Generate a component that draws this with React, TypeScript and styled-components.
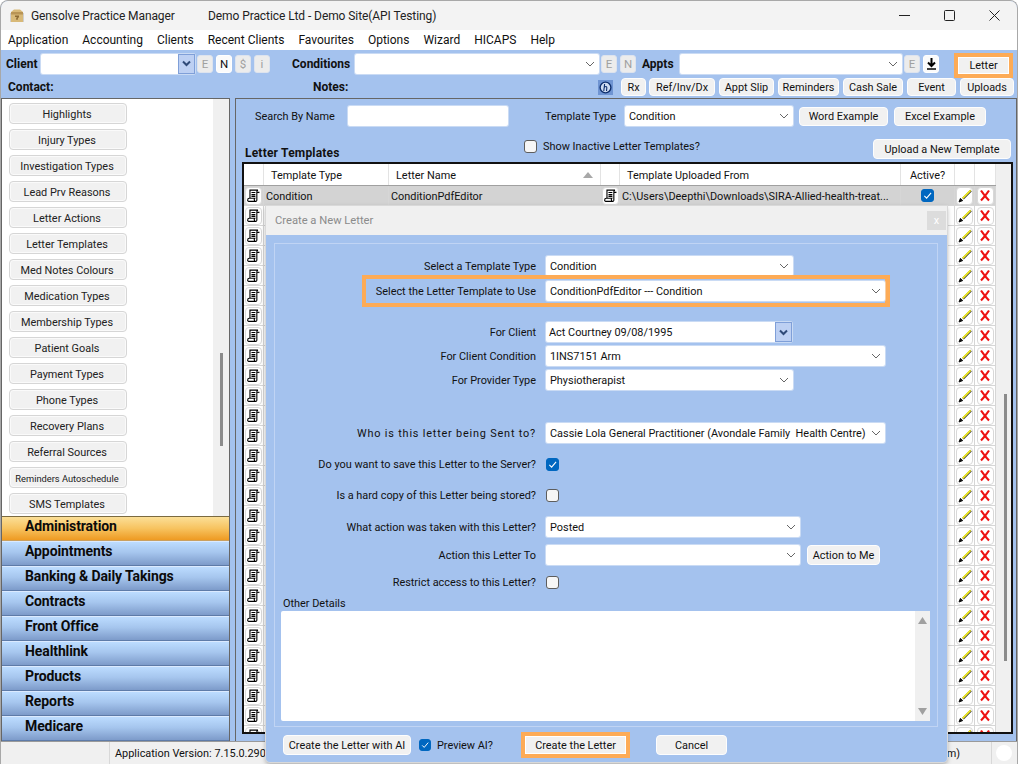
import React from 'react';
import styled, { createGlobalStyle } from 'styled-components';

const GlobalStyle = createGlobalStyle`
  html, body { margin: 0; padding: 0; background: #fff; }
  * { box-sizing: border-box; }
  body { font-family: Roboto, "Liberation Sans", sans-serif; font-size: 10.9px; color: #111; }
`;

const BLUE = '#a4c2ee';
const ORANGE = '#fdab56';

const Win = styled.div`
  position: relative;
  width: 1018px;
  height: 764px;
  overflow: hidden;
  display: flex;
  flex-direction: column;
  background: ${BLUE};
  border-radius: 8px 8px 0 0;
  border: 1px solid #a8a8a8;
  border-bottom: 0;
`;

const TitleBar = styled.div`
  height: 29px;
  flex: none;
  display: flex;
  align-items: center;
  background: #f3f3f3;
  padding-left: 8px;
  color: #222;
  font-size: 12px;
`;
const AppName = styled.span`
  margin-left: 6px;
  width: 177px;
  letter-spacing: -0.1px;
`;
const WinTitle = styled.span`
  flex: 1;
  letter-spacing: -0.08px;
`;
const WinBtn = styled.div`
  width: 45px;
  height: 29px;
  display: flex;
  align-items: center;
  justify-content: center;
`;

const MenuBar = styled.div`
  height: 20px;
  flex: none;
  display: flex;
  gap: 14px;
  align-items: center;
  padding-left: 7px;
  background: #fff;
  font-size: 12px;
`;

const ToolBar = styled.div`
  height: 48px;
  flex: none;
  padding-top: 3px;
`;
const ToolRow = styled.div`
  display: flex;
  align-items: center;
  height: 21px;
`;
const ToolRowTwo = styled(ToolRow)`
  height: 20px;
  margin-top: 3px;
`;
const BoldLabel = styled.span<{ $w: number; $ml?: number }>`
  width: ${(p) => p.$w}px;
  margin-left: ${(p) => p.$ml ?? 0}px;
  font-weight: 700;
  flex: none;
  font-size: 12px;
`;

const Combo = styled.div<{ $w: number; $ml?: number }>`
  width: ${(p) => p.$w}px;
  height: 20px;
  margin-left: ${(p) => p.$ml ?? 0}px;
  flex: none;
  display: flex;
  align-items: center;
  justify-content: space-between;
  padding-left: 4px;
  padding-right: 4px;
  background: #fff;
  border-radius: 2px;
  box-shadow: 0 0 0 1px rgba(240, 244, 250, 0.5);
  white-space: nowrap;
`;
const ComboInput = styled(Combo)`
  padding-left: 3px;
  padding-right: 0;
`;
const DropBtn = styled.div`
  width: 17px;
  height: 20px;
  display: flex;
  align-items: center;
  justify-content: center;
  background: #bdd0f3;
  border: 1px solid #7f9fd8;
`;
const MiniBtn = styled.div<{ $on?: boolean; $ml?: number }>`
  width: 16px;
  height: 18px;
  margin-left: ${(p) => p.$ml ?? 3}px;
  flex: none;
  display: flex;
  align-items: center;
  justify-content: center;
  background: ${(p) => (p.$on ? '#fbfbfb' : '#ececec')};
  border: 1px solid ${(p) => (p.$on ? '#fff' : '#dde3ee')};
  border-radius: 3px;
  font-size: 11.5px;
  color: ${(p) => (p.$on ? '#111' : '#a0a0a0')};
`;
const Btn = styled.div<{ $w: number; $ml?: number; $h?: number }>`
  width: ${(p) => p.$w}px;
  height: ${(p) => p.$h ?? 18}px;
  margin-left: ${(p) => p.$ml ?? 0}px;
  flex: none;
  display: flex;
  align-items: center;
  justify-content: center;
  background: #f1f1f1;
  border: 1.5px solid #fdfdfd;
  border-radius: 4px;
  white-space: nowrap;
`;
const Marked = styled.div<{ $ml?: number }>`
  margin-left: ${(p) => p.$ml ?? 0}px;
  flex: none;
  border: 4px solid ${ORANGE};
  background: #fff;
`;
const MarkedBtn = styled.div<{ $w: number; $h: number }>`
  width: ${(p) => p.$w}px;
  height: ${(p) => p.$h}px;
  display: flex;
  align-items: center;
  justify-content: center;
  background: #f1f1f1;
  border: 1.5px solid #fff;
`;
const LetterWrap = styled.div`
  margin-left: 15px;
  margin-top: 3px;
`;
const HelpMark = styled.div`
  width: 15px;
  height: 15px;
  flex: none;
  margin-left: 245px;
  display: flex;
  align-items: center;
  justify-content: center;
  background: #6f94d2;
`;

const Body = styled.div`
  flex: none;
  height: 643px;
  display: flex;
`;

const Side = styled.div`
  width: 229px;
  flex: none;
  display: flex;
  flex-direction: column;
  border: 1px solid #666;
  border-bottom: 0;
`;
const SideList = styled.div`
  height: 417px;
  flex: none;
  display: flex;
  background: #fff;
  overflow: hidden;
`;
const SideButtons = styled.div`
  width: 211px;
  padding: 4px 0 0 7px;
  display: flex;
  flex-direction: column;
  gap: 5px;
`;
const SideBtn = styled.div<{ $small?: boolean }>`
  width: 118px;
  height: 21px;
  flex: none;
  display: flex;
  align-items: center;
  justify-content: center;
  padding: 1px 2px 0 0;
  background: #f1f1f1;
  border: 1px solid #d6d6d6;
  border-radius: 4px;
  box-shadow: inset 0 0 0 1px #fafafa;
  font-size: ${(p) => (p.$small ? '9.3px' : '10.9px')};
  white-space: nowrap;
  color: #222;
`;
const Track = styled.div<{ $w: number; $top: number; $pl: number }>`
  width: ${(p) => p.$w}px;
  flex: none;
  background: #f0f0f0;
  padding-top: ${(p) => p.$top}px;
  padding-left: ${(p) => p.$pl}px;
`;
const Thumb = styled.div<{ $h: number }>`
  width: 3px;
  height: ${(p) => p.$h}px;
  background: #8b8b8b;
`;
const Section = styled.div<{ $on?: boolean }>`
  height: 25px;
  flex: none;
  display: flex;
  align-items: center;
  padding: 0 0 6px 23px;
  font-size: 14px;
  font-weight: 700;
  color: #0b0b0b;
  letter-spacing: -0.1px;
  border-top: 1px solid ${(p) => (p.$on ? '#7b6a40' : '#dbeaff')};
  border-bottom: 1px solid ${(p) => (p.$on ? '#c9a060' : '#5e7ba8')};
  background: ${(p) =>
    p.$on
      ? 'linear-gradient(#fbdf97, #f7c35f 50%, #ee9a22)'
      : 'linear-gradient(#bcdcff, #a6c6ee 45%, #7d9bca)'};
`;

const Main = styled.div`
  flex: none;
  width: 782px;
  margin-left: 5px;
  padding: 7px 0 0 6px;
  border: 1px solid #666;
  border-width: 1px 1px 0 1px;
`;
const FilterRow = styled.div`
  display: flex;
  align-items: center;
  height: 20px;
`;
const FieldLabel = styled.span<{ $w: number; $ml?: number }>`
  width: ${(p) => p.$w}px;
  margin-left: ${(p) => p.$ml ?? 0}px;
  flex: none;
  white-space: nowrap;
`;
const TitleRow = styled.div`
  display: flex;
  align-items: flex-start;
  height: 20px;
  margin-top: 13px;
`;
const TableTitle = styled.b`
  width: 279px;
  margin: 7px 0 0 3px;
  flex: none;
  font-size: 12px;
  letter-spacing: 0.2px;
`;
const Check = styled.div<{ $on?: boolean; $s?: number; $ml?: number; $mt?: number }>`
  width: ${(p) => p.$s ?? 13}px;
  height: ${(p) => p.$s ?? 13}px;
  margin-left: ${(p) => p.$ml ?? 0}px;
  margin-top: ${(p) => p.$mt ?? 0}px;
  flex: none;
  display: flex;
  align-items: center;
  justify-content: center;
  background: ${(p) => (p.$on ? '#0067c0' : '#f6f6f6')};
  border: 1px solid ${(p) => (p.$on ? '#0067c0' : '#5d5d5d')};
  border-radius: 3px;
`;
const InactiveLabel = styled(FieldLabel)`
  margin-top: 1px;
`;

const Table = styled.div`
  margin-top: 3px;
  width: 771px;
  height: 572px;
  display: flex;
  border: 2px solid #111;
  background: #fff;
  overflow: hidden;
`;
const TableCols = styled.div`
  width: 752px;
  flex: none;
  display: flex;
  flex-direction: column;
`;
const HeadRow = styled.div`
  display: grid;
  grid-template-columns: 20px 125px 212px 19px 281px 54px 20px 21px;
  height: 22px;
  flex: none;
  border-bottom: 1px solid #a0a0a0;
`;
const HeadCell = styled.div<{ $center?: boolean }>`
  display: flex;
  align-items: center;
  justify-content: ${(p) => (p.$center ? 'center' : 'space-between')};
  padding: 1px 7px 0;
  border-right: 1px solid #e3e3e3;
  white-space: nowrap;
`;
const DataRow = styled(HeadRow)<{ $on?: boolean }>`
  height: 20px;
  border-bottom: 1px solid #d6d6d6;
  background: ${(p) => (p.$on ? '#d3d3d3' : '#fff')};
`;
const DataCell = styled.div<{ $center?: boolean }>`
  display: flex;
  align-items: center;
  justify-content: ${(p) => (p.$center ? 'center' : 'flex-start')};
  padding-left: ${(p) => (p.$center ? 0 : 2)}px;
  padding-top: ${(p) => (p.$center ? 0 : 1)}px;
  border-right: 1px solid #d6d6d6;
  white-space: nowrap;
  overflow: hidden;
`;
const IconBtn = styled.div`
  width: 17px;
  height: 18px;
  flex: none;
  display: flex;
  align-items: center;
  justify-content: center;
  background: #fff;
  border: 1px solid #d8d8d8;
  border-radius: 4px;
`;

const Modal = styled.div`
  position: absolute;
  left: 265px;
  top: 205px;
  width: 681px;
  height: 556px;
  background: ${BLUE};
  border-radius: 0 0 4px 4px;
  box-shadow: 0 0 0 1px #d9d9d9, 0 2px 5px rgba(0, 0, 0, 0.35);
`;
const ModalHead = styled.div`
  height: 29px;
  display: flex;
  align-items: center;
  justify-content: space-between;
  padding: 0 1px 0 9px;
  background: #f0f0f0;
  color: #8b8b8b;
  font-size: 11.2px;
`;
const CloseBox = styled.div`
  width: 19px;
  height: 19px;
  display: flex;
  align-items: center;
  justify-content: center;
  background: #dcdcdc;
  color: #fff;
  font-size: 11px;
`;
const Frame = styled.div`
  margin: 8px 9px 0 8px;
  height: 484px;
  padding-top: 12px;
  border: 1px solid #c0d4f4;
`;
const FormRow = styled.div<{ $mt?: number }>`
  display: flex;
  align-items: center;
  height: 20px;
  margin-top: ${(p) => p.$mt ?? 0}px;
`;
const FormLabel = styled.span<{ $track?: number }>`
  width: 261px;
  margin-right: 10px;
  flex: none;
  text-align: right;
  white-space: nowrap;
  letter-spacing: ${(p) => p.$track ?? 0}px;
`;
const MarkedRow = styled.div`
  display: flex;
  align-items: center;
  width: 528px;
  height: 32px;
  margin: -1px 0 0 87px;
  border: 4px solid ${ORANGE};
  border-right-width: 5px;
  position: relative;
`;
const MarkedLabel = styled(FormLabel)`
  width: 170px;
`;
const OtherLabel = styled.div`
  margin: 3px 0 0 8px;
  height: 16px;
  display: flex;
  align-items: center;
`;
const Memo = styled.div`
  margin-left: 6px;
  width: 649px;
  height: 110px;
  display: flex;
  justify-content: flex-end;
  background: #fff;
  border-radius: 2px;
`;
const MemoBar = styled.div`
  width: 15px;
  background: #f0f0f0;
  display: flex;
  flex-direction: column;
  justify-content: space-between;
  align-items: center;
  padding: 6px 0;
`;
const ModalFoot = styled.div`
  display: flex;
  align-items: center;
  height: 26px;
  margin-top: 5px;
  padding-left: 17px;
`;
const FootText = styled.span`
  margin-left: 6px;
  width: 84px;
  flex: none;
`;

const Status = styled.div`
  flex: none;
  height: 23px;
  display: flex;
  align-items: center;
  background: #f0f0f0;
  border-top: 1px solid #9a9a9a;
`;
const StatusCell = styled.div<{ $w: number }>`
  width: ${(p) => p.$w}px;
  flex: none;
  height: 100%;
  display: flex;
  align-items: center;
  border-right: 1px solid #d8d8d8;
  white-space: nowrap;
`;
const StatusMain = styled(StatusCell)`
  padding-left: 5px;
`;
const StatusEnd = styled.span`
  margin-left: auto;
  padding-right: 31px;
`;
const Dot = styled.div`
  width: 16px;
  height: 16px;
  margin-left: 4px;
  border-radius: 50%;
  background: #fff;
`;

const Chevron = () => (
  <svg width="10" height="6" viewBox="0 0 10 6">
    <path d="M1 1l4 4 4-4" fill="none" stroke="#666" strokeWidth="1" />
  </svg>
);
const BlueChevron = () => (
  <svg width="9" height="7" viewBox="0 0 9 7">
    <path d="M1 1.5l3.5 3.5L8 1.5" fill="none" stroke="#2f4a78" strokeWidth="2" />
  </svg>
);
const Tick = ({ s = 9 }: { s?: number }) => (
  <svg width={s} height={s} viewBox="0 0 10 10">
    <path d="M1.5 5.5l2.5 2.5 5-6" fill="none" stroke="#fff" strokeWidth="1.2" />
  </svg>
);
const ScrollIcon = () => (
  <svg width="13" height="13" viewBox="0 0 14 14" fill="none" stroke="#000" strokeWidth="1.2">
    <path d="M3.2 10V1.2h8.6c-1 .3-1.2 1-1.2 1.8v9c0 .8-.6 1.3-1.4 1.3H1.8C1.1 13.3.7 12.6.7 12c0-1 1-2 1.8-2h5.8c-.4.5-.6 2 .2 3.2" />
    <path d="M4.8 3.8h4.2M4.8 6h4.2M4.8 8h4.2" />
    <path d="M10.8 3.6h2.6" />
  </svg>
);
const Pencil = () => (
  <svg width="14" height="14" viewBox="0 0 14 14">
    <path d="M13 1.6L5 9.6" stroke="#3a3a3a" strokeWidth="2.2" />
    <path d="M12.6 1.4L4.6 9.4" stroke="#f8f01a" strokeWidth="1.5" />
    <path d="M1 13l1.4-3.6 2.3 2.2z" fill="#111" stroke="#111" />
  </svg>
);
const Cross = () => (
  <svg width="12" height="13" viewBox="0 0 12 13">
    <path d="M2 1.5c2 3 5 7 8 10M10 1.5c-2 3-5 7-8 10" fill="none" stroke="#ee1111" strokeWidth="2.2" />
  </svg>
);
const BoxLogo = () => (
  <svg width="16" height="16" viewBox="0 0 16 16">
    <path d="M2 4l3-2.5h6L14 4v10H2z" fill="#d8b978" />
    <path d="M2 4h12v2.4H2z" fill="#b89455" />
    <path d="M6 7.4h4v1.6L8.8 10.4v1.4H7.2v-2L8.4 8.9H6z" fill="#8c6a33" />
    <path d="M1 5v9h1V5zM14 5v9h1V5z" fill="#cfcfcf" />
  </svg>
);
const SortUp = () => (
  <svg width="10" height="6" viewBox="0 0 10 6">
    <path d="M0 6l5-6 5 6z" fill="#a8a8a8" />
  </svg>
);
const MemoArrow = ({ down }: { down?: boolean }) => (
  <svg width="9" height="7" viewBox="0 0 9 7">
    <path d={down ? 'M0 0h9L4.5 7z' : 'M0 7h9L4.5 0z'} fill="#a0a0a0" />
  </svg>
);

const sideItems = [
  'Highlights', 'Injury Types', 'Investigation Types', 'Lead Prv Reasons', 'Letter Actions',
  'Letter Templates', 'Med Notes Colours', 'Medication Types', 'Membership Types', 'Patient Goals',
  'Payment Types', 'Phone Types', 'Recovery Plans', 'Referral Sources', 'Reminders Autoschedule',
  'SMS Templates',
];
const sections = ['Appointments', 'Banking & Daily Takings', 'Contracts', 'Front Office', 'Healthlink', 'Products', 'Reports', 'Medicare'];
const menus = ['Application', 'Accounting', 'Clients', 'Recent Clients', 'Favourites', 'Options', 'Wizard', 'HICAPS', 'Help'];
const rows = Array.from({ length: 28 }, (_, i) => i);

export default function App() {
  return (
    <Win>
      <GlobalStyle />
      <TitleBar>
        <BoxLogo />
        <AppName>Gensolve Practice Manager</AppName>
        <WinTitle>Demo Practice Ltd - Demo Site(API Testing)</WinTitle>
        <WinBtn>
          <svg width="11" height="11" viewBox="0 0 11 11"><path d="M0 5.5h11" stroke="#222" /></svg>
        </WinBtn>
        <WinBtn>
          <svg width="11" height="11" viewBox="0 0 11 11"><rect x=".5" y=".5" width="10" height="10" rx="1" fill="none" stroke="#222" /></svg>
        </WinBtn>
        <WinBtn>
          <svg width="11" height="11" viewBox="0 0 11 11"><path d="M.5.5l10 10M10.5.5l-10 10" stroke="#222" /></svg>
        </WinBtn>
      </TitleBar>

      <MenuBar>
        {menus.map((m) => <span key={m}>{m}</span>)}
      </MenuBar>

      <ToolBar>
        <ToolRow>
          <BoldLabel $w={35} $ml={5}>Client</BoldLabel>
          <ComboInput $w={154}>
            <span />
            <DropBtn><BlueChevron /></DropBtn>
          </ComboInput>
          <MiniBtn $ml={2}>E</MiniBtn>
          <MiniBtn $on>N</MiniBtn>
          <MiniBtn>$</MiniBtn>
          <MiniBtn>i</MiniBtn>
          <BoldLabel $w={63} $ml={22}>Conditions</BoldLabel>
          <Combo $w={244}><span /><Chevron /></Combo>
          <MiniBtn $ml={2}>E</MiniBtn>
          <MiniBtn>N</MiniBtn>
          <BoldLabel $w={38} $ml={6}>Appts</BoldLabel>
          <Combo $w={222}><span /><Chevron /></Combo>
          <MiniBtn $ml={2}>E</MiniBtn>
          <MiniBtn $on $ml={3}>
            <svg width="11" height="12" viewBox="0 0 11 12">
              <path d="M5.5 0v7M2 4.5l3.5 3.5L9 4.5" fill="none" stroke="#000" strokeWidth="2" />
              <path d="M1 11h9" stroke="#000" strokeWidth="1.5" />
            </svg>
          </MiniBtn>
          <LetterWrap>
            <Marked><MarkedBtn $w={51} $h={17}>Letter</MarkedBtn></Marked>
          </LetterWrap>
        </ToolRow>
        <ToolRowTwo>
          <BoldLabel $w={60} $ml={7}>Contact:</BoldLabel>
          <BoldLabel $w={40} $ml={245}>Notes:</BoldLabel>
          <HelpMark>
            <svg width="13" height="13" viewBox="0 0 13 13">
              <circle cx="6.5" cy="6.5" r="5.4" fill="#cfdcf2" stroke="#10306e" strokeWidth="1.4" />
              <path d="M5.6 3L4.8 10M5 7c1-2 3-2 2.8 0L7.5 10" fill="none" stroke="#10306e" strokeWidth="1.1" />
            </svg>
          </HelpMark>
          <Btn $w={25} $ml={8}>Rx</Btn>
          <Btn $w={66} $ml={3}>Ref/Inv/Dx</Btn>
          <Btn $w={55} $ml={4}>Appt Slip</Btn>
          <Btn $w={61} $ml={4}>Reminders</Btn>
          <Btn $w={60} $ml={4}>Cash Sale</Btn>
          <Btn $w={49} $ml={4}>Event</Btn>
          <Btn $w={54} $ml={4}>Uploads</Btn>
        </ToolRowTwo>
      </ToolBar>

      <Body>
        <Side>
          <SideList>
            <SideButtons>
              {sideItems.map((s) => (
                <SideBtn key={s} $small={s === 'Reminders Autoschedule'}>{s}</SideBtn>
              ))}
            </SideButtons>
            <Track $w={16} $top={254} $pl={7}><Thumb $h={93} /></Track>
          </SideList>
          <Section $on>Administration</Section>
          {sections.map((s) => <Section key={s}>{s}</Section>)}
        </Side>

        <Main>
          <FilterRow>
            <FieldLabel $w={93} $ml={13}>Search By Name</FieldLabel>
            <Combo $w={160} />
            <FieldLabel $w={80} $ml={37}>Template Type</FieldLabel>
            <Combo $w={168}>Condition<Chevron /></Combo>
            <Btn $w={89} $ml={6} $h={19}>Word Example</Btn>
            <Btn $w={92} $ml={6} $h={19}>Excel Example</Btn>
          </FilterRow>
          <TitleRow>
            <TableTitle>Letter Templates</TableTitle>
            <Check $mt={1} />
            <InactiveLabel $w={330} $ml={6}>Show Inactive Letter Templates?</InactiveLabel>
            <Btn $w={138} $h={20}>Upload a New Template</Btn>
          </TitleRow>
          <Table>
            <TableCols>
              <HeadRow>
                <HeadCell />
                <HeadCell>Template Type</HeadCell>
                <HeadCell>Letter Name<SortUp /></HeadCell>
                <HeadCell />
                <HeadCell>Template Uploaded From</HeadCell>
                <HeadCell $center>Active?</HeadCell>
                <HeadCell />
                <HeadCell />
              </HeadRow>
              {rows.map((i) => (
                <DataRow key={i} $on={i === 0}>
                  <DataCell $center><IconBtn><ScrollIcon /></IconBtn></DataCell>
                  <DataCell>{i === 0 && 'Condition'}</DataCell>
                  <DataCell>{i === 0 && 'ConditionPdfEditor'}</DataCell>
                  <DataCell $center>{i === 0 && <IconBtn><ScrollIcon /></IconBtn>}</DataCell>
                  <DataCell>{i === 0 && 'C:\\Users\\Deepthi\\Downloads\\SIRA-Allied-health-treat...'}</DataCell>
                  <DataCell $center>{i === 0 && <Check $on><Tick /></Check>}</DataCell>
                  <DataCell $center><IconBtn><Pencil /></IconBtn></DataCell>
                  <DataCell $center><IconBtn><Cross /></IconBtn></DataCell>
                </DataRow>
              ))}
            </TableCols>
            <Track $w={15} $top={230} $pl={8}><Thumb $h={267} /></Track>
          </Table>
        </Main>
      </Body>

      <Status>
        <StatusCell $w={109} />
        <StatusMain $w={882}>
          Application Version: 7.15.0.2900
          <StatusEnd>m)</StatusEnd>
        </StatusMain>
        <Dot />
      </Status>

      <Modal>
        <ModalHead>
          Create a New Letter
          <CloseBox>x</CloseBox>
        </ModalHead>
        <Frame>
          <FormRow>
            <FormLabel>Select a Template Type</FormLabel>
            <Combo $w={247}>Condition<Chevron /></Combo>
          </FormRow>
          <MarkedRow>
            <MarkedLabel>Select the Letter Template to Use</MarkedLabel>
            <Combo $w={339}>ConditionPdfEditor --- Condition<Chevron /></Combo>
          </MarkedRow>
          <FormRow $mt={15}>
            <FormLabel>For Client</FormLabel>
            <ComboInput $w={246}>
              Act Courtney 09/08/1995
              <DropBtn><BlueChevron /></DropBtn>
            </ComboInput>
          </FormRow>
          <FormRow $mt={4}>
            <FormLabel>For Client Condition</FormLabel>
            <Combo $w={339}>1INS7151 Arm<Chevron /></Combo>
          </FormRow>
          <FormRow $mt={4}>
            <FormLabel>For Provider Type</FormLabel>
            <Combo $w={247}>Physiotherapist<Chevron /></Combo>
          </FormRow>
          <FormRow $mt={33}>
            <FormLabel $track={0.8}>Who is this letter being Sent to?</FormLabel>
            <Combo $w={339}>Cassie Lola General Practitioner (Avondale Family&nbsp; Health Centre)<Chevron /></Combo>
          </FormRow>
          <FormRow $mt={11}>
            <FormLabel>Do you want to save this Letter to the Server?</FormLabel>
            <Check $on><Tick /></Check>
          </FormRow>
          <FormRow $mt={11}>
            <FormLabel>Is a hard copy of this Letter being stored?</FormLabel>
            <Check />
          </FormRow>
          <FormRow $mt={12}>
            <FormLabel>What action was taken with this Letter?</FormLabel>
            <Combo $w={254}>Posted<Chevron /></Combo>
          </FormRow>
          <FormRow $mt={8}>
            <FormLabel>Action this Letter To</FormLabel>
            <Combo $w={254}><span /><Chevron /></Combo>
            <Btn $w={73} $ml={7} $h={20}>Action to Me</Btn>
          </FormRow>
          <FormRow $mt={7}>
            <FormLabel>Restrict access to this Letter?</FormLabel>
            <Check />
          </FormRow>
          <OtherLabel>Other Details</OtherLabel>
          <Memo>
            <MemoBar><MemoArrow /><MemoArrow down /></MemoBar>
          </Memo>
        </Frame>
        <ModalFoot>
          <Btn $w={128} $h={20}>Create the Letter with AI</Btn>
          <Check $on $s={12} $ml={8}><Tick s={8} /></Check>
          <FootText>Preview AI?</FootText>
          <Marked><MarkedBtn $w={101} $h={18}>Create the Letter</MarkedBtn></Marked>
          <Btn $w={71} $ml={26} $h={20}>Cancel</Btn>
        </ModalFoot>
      </Modal>
    </Win>
  );
}
